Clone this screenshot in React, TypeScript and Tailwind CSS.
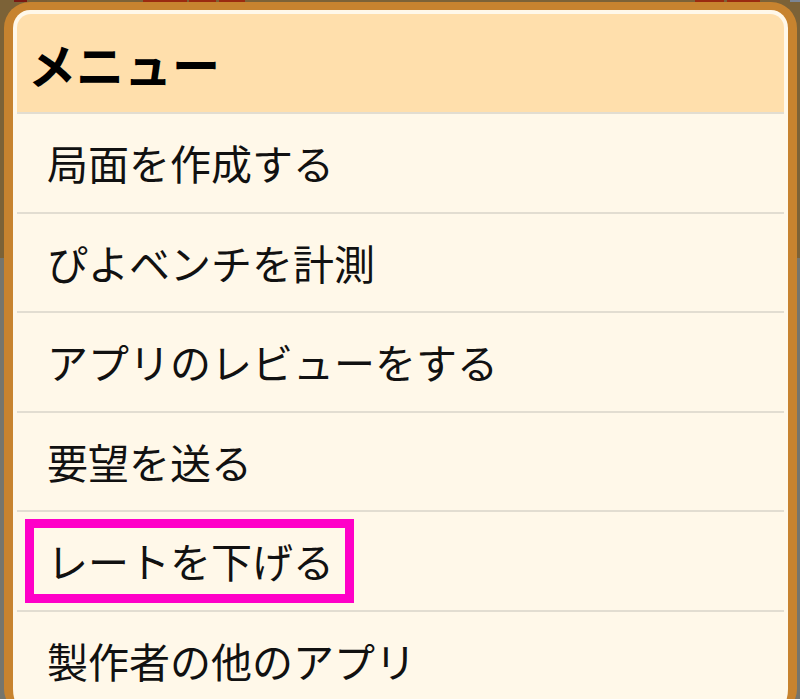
import React from 'react';

const items = [
  '局面を作成する',
  'ぴよベンチを計測',
  'アプリのレビューをする',
  '要望を送る',
  'レートを下げる',
  '製作者の他のアプリ',
];

const jp = { fontFamily: '"Noto Sans CJK JP", "Noto Sans", sans-serif' };

export default function App() {
  return (
    <div
      className="w-[800px] h-[699px] overflow-hidden flex flex-col bg-[linear-gradient(to_bottom,#7c6237_258px,#75756d_258px)]"
      style={jp}
    >
      {/* backdrop strip peeking above the dialog */}
      <div className="h-[2px] shrink-0 flex">
        <div className="w-[14px]" />
        <div className="w-[13px] bg-[#7a1a12]" />
        <div className="w-[116px]" />
        <div className="w-[44px] bg-[#9a2a10]" />
        <div className="w-[2px]" />
        <div className="w-[27px] bg-[#9a2a10]" />
        <div className="w-[3px]" />
        <div className="w-[26px] bg-[#9a2a10]" />
        <div className="w-[450px]" />
        <div className="w-[29px] bg-[#9a2a10]" />
        <div className="w-[3px]" />
        <div className="w-[33px] bg-[#9a2a10]" />
        <div className="flex-1" />
        <div className="w-[10px] bg-[#7b8594]" />
      </div>

      <div className="ml-[4px] w-[793px] shrink-0 rounded-[26px] border-x-[9px] border-t-[8px] border-[#c7832f] bg-[#fff8ea] p-[4px] flex flex-col">
        <div className="h-[100px] rounded-t-[14px] bg-[#ffdfac] border-b-2 border-[#e2ddd1] flex items-center pl-[11px]">
          <span className="text-[48px] leading-none font-bold text-black">メニュー</span>
        </div>
        {items.map((item, i) => (
          <div
            key={item}
            className="relative h-[99.5px] bg-[#fff8e9] border-b-2 border-[#e2ddd1] flex items-center pl-[30px]"
          >
            <span className="text-[41px] leading-none text-[#111]">{item}</span>
            {i === 4 && (
              <div className="absolute left-[8px] top-[7px] w-[329px] h-[84px] border-[9px] border-[#ff00c8]" />
            )}
          </div>
        ))}
      </div>
    </div>
  );
}
